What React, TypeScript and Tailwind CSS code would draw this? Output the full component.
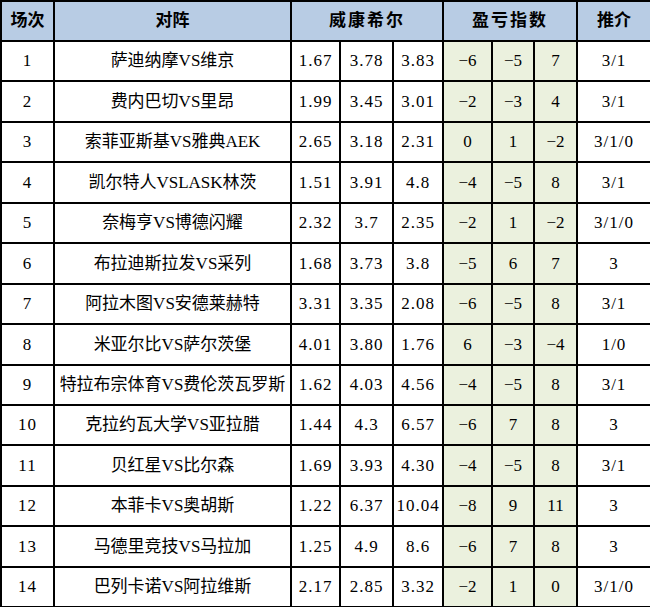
import React from "react";

type Row = {
  no: number;
  match: string;
  odds: [string, string, string];
  idx: [string, string, string];
  tip: string;
};

const rows: Row[] = [
  { no: 1, match: "萨迪纳摩VS维京", odds: ["1.67", "3.78", "3.83"], idx: ["−6", "−5", "7"], tip: "3/1" },
  { no: 2, match: "费内巴切VS里昂", odds: ["1.99", "3.45", "3.01"], idx: ["−2", "−3", "4"], tip: "3/1" },
  { no: 3, match: "索菲亚斯基VS雅典AEK", odds: ["2.65", "3.18", "2.31"], idx: ["0", "1", "−2"], tip: "3/1/0" },
  { no: 4, match: "凯尔特人VSLASK林茨", odds: ["1.51", "3.91", "4.8"], idx: ["−4", "−5", "8"], tip: "3/1" },
  { no: 5, match: "奈梅亨VS博德闪耀", odds: ["2.32", "3.7", "2.35"], idx: ["−2", "1", "−2"], tip: "3/1/0" },
  { no: 6, match: "布拉迪斯拉发VS采列", odds: ["1.68", "3.73", "3.8"], idx: ["−5", "6", "7"], tip: "3" },
  { no: 7, match: "阿拉木图VS安德莱赫特", odds: ["3.31", "3.35", "2.08"], idx: ["−6", "−5", "8"], tip: "3/1" },
  { no: 8, match: "米亚尔比VS萨尔茨堡", odds: ["4.01", "3.80", "1.76"], idx: ["6", "−3", "−4"], tip: "1/0" },
  { no: 9, match: "特拉布宗体育VS费伦茨瓦罗斯", odds: ["1.62", "4.03", "4.56"], idx: ["−4", "−5", "8"], tip: "3/1" },
  { no: 10, match: "克拉约瓦大学VS亚拉腊", odds: ["1.44", "4.3", "6.57"], idx: ["−6", "7", "8"], tip: "3" },
  { no: 11, match: "贝红星VS比尔森", odds: ["1.69", "3.93", "4.30"], idx: ["−4", "−5", "8"], tip: "3/1" },
  { no: 12, match: "本菲卡VS奥胡斯", odds: ["1.22", "6.37", "10.04"], idx: ["−8", "9", "11"], tip: "3" },
  { no: 13, match: "马德里竞技VS马拉加", odds: ["1.25", "4.9", "8.6"], idx: ["−6", "7", "8"], tip: "3" },
  { no: 14, match: "巴列卡诺VS阿拉维斯", odds: ["2.17", "2.85", "3.32"], idx: ["−2", "1", "0"], tip: "3/1/0" },
];

const font = { fontFamily: '"Liberation Serif", "Noto Sans CJK SC", serif' };

export default function App() {
  const cell = "border-2 border-black text-center align-middle p-0";
  return (
    <div className="w-[650px] h-[607px] bg-white text-black" style={font}>
      <table className="table-fixed border-collapse w-[650px]">
        <colgroup>
          <col className="w-[53px]" />
          <col className="w-[237px]" />
          <col className="w-[49px]" />
          <col className="w-[53px]" />
          <col className="w-[50px]" />
          <col className="w-[49px]" />
          <col className="w-[42px]" />
          <col className="w-[43px]" />
          <col className="w-[74px]" />
        </colgroup>
        <thead>
          <tr className="h-[40px] bg-[#b8cce4] text-[17px] font-bold">
            <th className={cell}>场次</th>
            <th className={cell}>对阵</th>
            <th colSpan={3} className={`${cell} tracking-[2px]`}>威康希尔</th>
            <th colSpan={3} className={`${cell} tracking-[2px]`}>盈亏指数</th>
            <th className={cell}>推介</th>
          </tr>
        </thead>
        <tbody>
          {rows.map((r) => (
            <tr key={r.no} className="h-[40.45px] text-[17px]">
              <td className={`${cell} tracking-[1px]`}>{r.no}</td>
              <td className={`${cell} whitespace-nowrap`}>{r.match}</td>
              {r.odds.map((o, i) => (
                <td key={i} className={`${cell} tracking-[1px]`}>
                  {o}
                </td>
              ))}
              {r.idx.map((v, i) => (
                <td key={i} className={`${cell} bg-[#ebf1de]`}>
                  {v}
                </td>
              ))}
              <td className={`${cell} tracking-[1px]`}>{r.tip}</td>
            </tr>
          ))}
        </tbody>
      </table>
    </div>
  );
}
